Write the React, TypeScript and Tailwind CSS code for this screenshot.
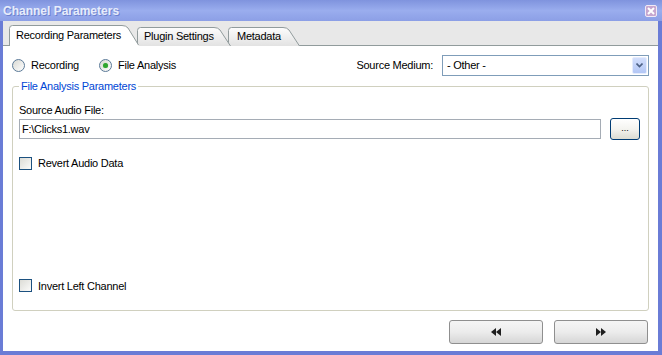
import React from 'react';

const font = "font-['Liberation_Sans','Arial',sans-serif]";

function Tab({
  label,
  width,
  selected,
  z,
  textPad,
}: {
  label: string;
  width: number;
  selected?: boolean;
  z: string;
  textPad: string;
}) {
  const h = selected ? 21 : 19;
  const w = width;
  const path = `M0.5,${h} V3.5 Q0.5,0.5 3.5,0.5 H${w - 17} Q${w - 13},0.5 ${w - 11},3 L${w - 0.5},${h - (selected ? 1 : 0)}`;
  return (
    <div className={`relative ${z} -mb-px shrink-0`} style={{ width: w, height: h }}>
      <svg className="absolute inset-0" width={w} height={h}>
        <defs>
          <linearGradient id="tabg" x1="0" y1="0" x2="0" y2="1">
            <stop offset="0" stopColor="#fdfdfd" />
            <stop offset="1" stopColor="#e2e2e2" />
          </linearGradient>
        </defs>
        <path d={path + (selected ? ` V${h} Z` : ` Z`)} fill={selected ? '#ffffff' : 'url(#tabg)'} stroke="none" />
        <path d={path} fill="none" stroke="#919b9c" strokeWidth="1" />
      </svg>
      <div className={`relative flex h-full items-center ${textPad} text-[11px] tracking-[-0.25px] text-black leading-none ${selected ? 'pb-[1px]' : ''}`}>
        {label}
      </div>
    </div>
  );
}

function Radio({ checked, label, className }: { checked?: boolean; label: string; className?: string }) {
  return (
    <div className={`flex items-center ${className ?? ''}`}>
      <div className="flex h-[13px] w-[13px] items-center justify-center rounded-full border border-[#5b7a98] bg-gradient-to-br from-[#d9d9d3] to-[#ffffff]">
        {checked && <div className="h-[5px] w-[5px] rounded-full bg-[#2fa52f] shadow-[0_0_1px_#7fd27f]" />}
      </div>
      <span className="ml-[6px] text-[11px] tracking-[-0.25px] text-black">{label}</span>
    </div>
  );
}

function Checkbox({ label }: { label: string }) {
  return (
    <div className="flex items-center">
      <div className="h-[13px] w-[13px] border border-[#1c5180] bg-gradient-to-br from-[#dcdcd6] to-[#fbfbfa]" />
      <span className="ml-[6px] text-[11px] tracking-[-0.25px] text-black">{label}</span>
    </div>
  );
}

function NavButton({ dir }: { dir: 'back' | 'fwd' }) {
  return (
    <button className="flex h-[24px] w-[94px] items-center justify-center rounded-[3px] border border-[#8f8f8f] bg-gradient-to-b from-[#f5f5f5] via-[#ececec] to-[#d6d6d6]">
      <svg width="10" height="8" viewBox="0 0 10 8">
        {dir === 'back' ? (
          <>
            <polygon points="5,0 0,4 5,8" fill="#1e1e1e" />
            <polygon points="10,0 5,4 10,8" fill="#1e1e1e" />
          </>
        ) : (
          <>
            <polygon points="0,0 5,4 0,8" fill="#1e1e1e" />
            <polygon points="5,0 10,4 5,8" fill="#1e1e1e" />
          </>
        )}
      </svg>
    </button>
  );
}

export default function App() {
  return (
    <div className={`flex h-[355px] w-[662px] flex-col bg-[#6a7cd6] ${font}`}>
      {/* title bar */}
      <div className="flex h-[21px] items-center justify-between bg-gradient-to-b from-[#7f93de] via-[#9aadee] to-[#8c9fe6] pl-[3px] pr-[5px]">
        <span className="text-[12px] font-bold text-[#e6ecfb] [text-shadow:1px_1px_0_#6c80cf]">Channel Parameters</span>
        <div className="flex h-[12px] w-[12px] items-center justify-center rounded-[2px] border border-[#f1eaf6] bg-[#c6a6cf]">
          <svg width="8" height="8" viewBox="0 0 8 8">
            <path d="M1,1 L7,7 M7,1 L1,7" stroke="#ffffff" strokeWidth="2" />
          </svg>
        </div>
      </div>

      {/* body */}
      <div className="ml-[3px] mr-[4px] mb-[4px] flex flex-1 flex-col bg-white">
        <div className="flex h-[25px] items-end border-b border-[#919b9c] bg-[#e8e8e8] pl-[6px]">
          <Tab label="Recording Parameters" width={130} selected z="z-30" textPad="pl-[7px]" />
          <Tab label="Plugin Settings" width={94} z="z-20 -ml-[2px]" textPad="pl-[7px]" />
          <Tab label="Metadata" width={72} z="z-10 -ml-[3px]" textPad="pl-[9px]" />
        </div>

        <div className="flex flex-1 flex-col px-[9px] pt-[9px]">
          <div className="flex h-[21px] items-center">
            <Radio label="Recording" className="w-[87px]" />
            <Radio label="File Analysis" checked />
            <span className="ml-auto mr-[9px] text-[11px] tracking-[-0.25px] text-black">Source Medium:</span>
            <div className="flex h-[21px] w-[207px] items-center justify-between border border-[#7f9db9] bg-white pl-[4px] pr-[1px]">
              <span className="text-[11px] tracking-[-0.25px] text-black">- Other -</span>
              <div className="flex h-[17px] w-[15px] items-center justify-center rounded-[2px] border border-[#e5ecfd] bg-gradient-to-b from-[#d2defc] to-[#b3c7f5]">
                <svg width="7" height="5" viewBox="0 0 7 5">
                  <path d="M0.5,0.5 L3.5,3.5 L6.5,0.5" fill="none" stroke="#4d6185" strokeWidth="1.6" />
                </svg>
              </div>
            </div>
          </div>

          <fieldset className="mt-[4px] rounded-[3px] border border-[#d0d0bf] px-[6px] pb-[16px]">
            <legend className="px-[2px] text-[11px] tracking-[-0.25px] leading-[13px] text-[#0046d5]">File Analysis Parameters</legend>
            <div className="flex h-[201px] flex-col">
              <span className="mt-[11px] text-[11px] tracking-[-0.25px] leading-[13px] text-black">Source Audio File:</span>
              <div className="mt-[1px] flex items-center gap-[9px] pr-[2px]">
                <div className="flex h-[20px] flex-1 items-center border border-[#a5acb5] bg-white pl-[2px] text-[11px] tracking-[-0.25px] text-black">
                  F:\Clicks1.wav
                </div>
                <button className="flex h-[22px] w-[30px] items-start justify-center rounded-[3px] border border-[#003c74] bg-gradient-to-b from-[#ffffff] via-[#f4f4f0] to-[#dcdcd2] pt-[5px] text-[9px] leading-none text-black">
                  ...
                </button>
              </div>
              <div className="mt-[15px]">
                <Checkbox label="Revert Audio Data" />
              </div>
              <div className="flex-1" />
              <Checkbox label="Invert Left Channel" />
            </div>
          </fieldset>

          <div className="mt-[9px] flex justify-end gap-[11px] pr-[1px]">
            <NavButton dir="back" />
            <NavButton dir="fwd" />
          </div>
        </div>
      </div>
    </div>
  );
}
